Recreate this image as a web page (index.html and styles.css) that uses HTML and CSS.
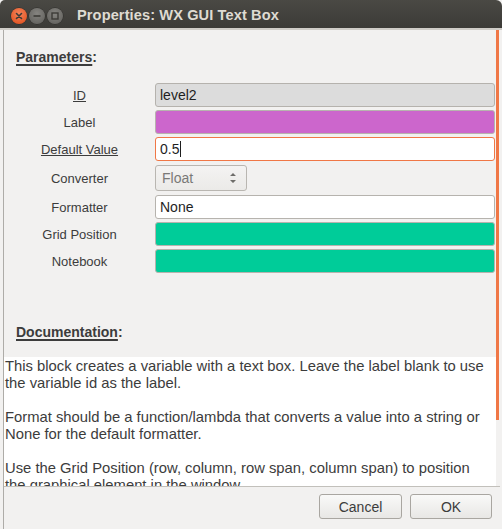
FILE: index.html
```html
<!DOCTYPE html>
<html>
<head>
<meta charset="utf-8">
<link rel="stylesheet" href="styles.css">
</head>
<body>
<div class="window">
  <div class="titlebar">
    <div class="controls">
      <span class="wbtn close"><svg width="16" height="16" viewBox="0 0 16 16"><path d="M5.5 5.5 L10.5 10.5 M10.5 5.5 L5.5 10.5" stroke="#3c3b37" stroke-width="1.6" stroke-linecap="round"/></svg></span>
      <span class="wbtn"><svg width="16" height="16" viewBox="0 0 16 16"><path d="M4.5 8 H11.5" stroke="#3c3b37" stroke-width="1.6"/></svg></span>
      <span class="wbtn"><svg width="16" height="16" viewBox="0 0 16 16"><rect x="5" y="5" width="6" height="6" fill="none" stroke="#3c3b37" stroke-width="1.4"/></svg></span>
    </div>
    <div class="title">Properties: WX GUI Text Box</div>
  </div>
  <div class="body">
    <div class="panel">
      <div class="heading"><u>Parameters</u>:</div>
      <div class="grid">
        <div class="plabel"><u>ID</u></div>
        <div class="field disabled">level2</div>
        <div class="plabel">Label</div>
        <div class="field pink"></div>
        <div class="plabel"><u>Default Value</u></div>
        <div class="field focused">0.5<span class="caret"></span></div>
        <div class="plabel">Converter</div>
        <div class="combo-cell">
          <div class="combo">
            <span>Float</span>
            <svg width="8" height="14" viewBox="0 0 8 14"><path d="M1 5 L4 2 L7 5 Z M1 9 L4 12 L7 9 Z" fill="#6e6d6a"/></svg>
          </div>
        </div>
        <div class="plabel">Formatter</div>
        <div class="field">None</div>
        <div class="plabel">Grid Position</div>
        <div class="field green"></div>
        <div class="plabel">Notebook</div>
        <div class="field green"></div>
      </div>
      <div class="heading doc-heading"><u>Documentation</u>:</div>
      <div class="doc">
        <p>This block creates a variable with a text box. Leave the label blank to use<br>the variable id as the label.</p>
        <p>Format should be a function/lambda that converts a value into a string or<br>None for the default formatter.</p>
        <p>Use the Grid Position (row, column, row span, column span) to position<br>the graphical element in the window.</p>
      </div>
      <div class="scrollbar"></div>
    </div>
    <div class="buttons">
      <button class="btn cancel">Cancel</button>
      <button class="btn ok">OK</button>
    </div>
  </div>
</div>
</body>
</html>
```
FILE: styles.css
```css
html, body {
  margin: 0;
  padding: 0;
  background: #f2f1f0;
  overflow: hidden;
}
.window {
  width: 502px;
  height: 529px;
  display: flex;
  flex-direction: column;
  font-family: "Liberation Sans", Arial, sans-serif;
  color: #3c3c3c;
}
.titlebar {
  height: 28px;
  flex: none;
  display: flex;
  align-items: center;
  background: linear-gradient(#4a4944, #3c3b37);
  border-radius: 5px 6px 0 0;
  border-bottom: 2px solid #cfccc7;
}
.controls {
  display: flex;
  align-items: center;
  gap: 2px;
  margin-left: 11px;
  margin-top: 3px;
}
.wbtn {
  width: 16px;
  height: 16px;
  border-radius: 50%;
  background: radial-gradient(circle at 50% 35%, #858480, #5d5c58);
  box-shadow: 0 0 0 0.5px #2e2d2a;
  display: flex;
}
.wbtn.close {
  background: radial-gradient(circle at 50% 35%, #f4835a, #df4a16);
}
.title {
  margin-left: 14px;
  margin-top: 2px;
  font-weight: bold;
  font-size: 14.6px;
  color: #dfdbd2;
  letter-spacing: 0.1px;
}
.body {
  flex: 1;
  display: flex;
  flex-direction: column;
  margin-left: 3px;
  border-left: 1px solid #aeaca8;
  margin-right: 2px;
  min-height: 0;
}
.panel {
  position: relative;
  height: 457px;
  flex: none;
  display: flex;
  flex-direction: column;
  overflow: hidden;
  border-bottom: 1px solid #c2c0bb;
  box-sizing: border-box;
}
.heading {
  font-weight: bold;
  font-size: 14px;
  line-height: 17px;
  margin-left: 12px;
  margin-top: 19px;
  color: #3c3c3c;
}
.heading u {
  text-decoration-thickness: 2px;
  text-underline-offset: 2px;
}
.grid {
  display: grid;
  grid-template-columns: 151px 340px;
  grid-template-rows: 24px 24px 24px 28px 24px 24px 24px;
  row-gap: 3px;
  margin-top: 17px;
}
.plabel {
  font-size: 13px;
  text-align: center;
  align-self: center;
  color: #3c3c3c;
}
.field {
  box-sizing: border-box;
  border: 1px solid #b6b3ae;
  border-radius: 3px;
  background: #fff;
  font-size: 14px;
  line-height: 22px;
  padding-left: 4px;
  color: #1e1e1e;
  display: flex;
  align-items: center;
}
.field.disabled {
  background: #dcdcdc;
  border-color: #b5b2ad;
}
.field.pink {
  background: #cc66cc;
  border-color: #b7b3ae;
}
.field.green {
  background: #00cc99;
  border-color: #b7b3ae;
}
.field.focused {
  border-color: #f07746;
}
.caret {
  display: inline-block;
  width: 1px;
  height: 16px;
  background: #1e1e1e;
  margin-left: 1px;
}
.combo-cell {
  display: flex;
  align-items: center;
}
.combo {
  box-sizing: border-box;
  width: 92px;
  height: 26px;
  border: 1px solid #b9b6b1;
  border-radius: 3px;
  background: linear-gradient(#f4f3f2, #ebeae8);
  display: flex;
  align-items: center;
  justify-content: space-between;
  padding: 0 9px 0 6px;
  font-size: 14px;
  color: #7a7977;
}
.doc-heading {
  margin-top: 51px;
}
.doc {
  flex: 1;
  margin-top: 16px;
  background: #fff;
  margin-right: 4px;
  padding: 1px 0 0 1px;
  font-size: 14.8px;
  line-height: 17px;
  color: #3c3c3c;
  overflow: hidden;
}
.doc p {
  margin: 0 0 17px 0;
  white-space: nowrap;
}
.scrollbar {
  position: absolute;
  right: 1px;
  top: 0;
  width: 3px;
  height: 390px;
  background: #f07746;
}
.buttons {
  flex: 1;
  display: flex;
  justify-content: flex-end;
  align-items: flex-start;
  gap: 8px;
  padding: 7px 8px 0 0;
}
.btn {
  box-sizing: border-box;
  height: 25px;
  border: 1px solid #a9a6a1;
  border-radius: 3px;
  background: linear-gradient(#f9f9f8, #e8e7e5);
  font-family: "Liberation Sans", Arial, sans-serif;
  font-size: 14px;
  color: #3c3c3c;
  padding: 0;
}
.btn.cancel { width: 83px; }
.btn.ok { width: 82px; }
```
